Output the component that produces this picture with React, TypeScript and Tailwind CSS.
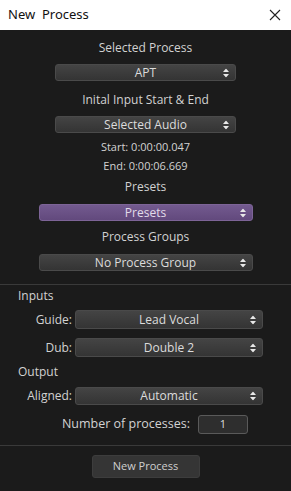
import React from 'react';

function Arrows() {
  return (
    <svg width="6" height="9" viewBox="0 0 6 9" className="shrink-0">
      <path d="M3 0 L6 3.5 L0 3.5 Z" fill="#e8e8e8" />
      <path d="M3 9 L6 5.5 L0 5.5 Z" fill="#e8e8e8" />
    </svg>
  );
}

function Select({ value, className }: { value: string; className: string }) {
  return (
    <div className={`relative flex items-center justify-center rounded-[3px] border text-[12px] leading-none ${className}`}>
      <span>{value}</span>
      <div className="absolute right-[6px] top-1/2 -translate-y-1/2 flex">
        <Arrows />
      </div>
    </div>
  );
}

const grey = 'border-[#4a4a4a] bg-gradient-to-b from-[#444] to-[#343434] text-[#dcdcdc]';

export default function App() {
  return (
    <div className="w-[291px] h-[491px] flex flex-col bg-[#1b1b1b]" style={{ fontFamily: '"Open Sans", "Noto Sans", sans-serif' }}>
      <div className="h-[30px] bg-white flex items-center justify-between pl-[8px] pr-[10px]">
        <span className="text-[13px] text-[#111]" style={{ fontFamily: '"Noto Sans", sans-serif' }}>New&nbsp; Process</span>
        <svg width="12" height="12" viewBox="0 0 12 12">
          <path d="M1 1 L11 11 M11 1 L1 11" stroke="#222" strokeWidth="1.1" />
        </svg>
      </div>

      <div className="flex flex-col items-center text-[#d2d2d2] text-[12px]">
        <div className="mt-[10px] h-[16px] leading-[16px]">Selected Process</div>
        <Select value="APT" className={`mt-[8px] w-[181px] h-[17px] ${grey}`} />
        <div className="mt-[11px] h-[16px] leading-[16px]">Inital Input Start &amp; End</div>
        <Select value="Selected Audio" className={`mt-[8px] w-[181px] h-[17px] ${grey}`} />
        <div className="mt-[6px] h-[16px] leading-[16px] text-[11px]">Start: 0:00:00.047</div>
        <div className="mt-[3px] h-[16px] leading-[16px] text-[11px]">End: 0:00:06.669</div>
        <div className="mt-[5px] h-[16px] leading-[16px]">Presets</div>
        <Select value="Presets" className="mt-[9px] w-[214px] h-[17px] border-[#7d6497] bg-gradient-to-b from-[#735a8f] to-[#62497d] text-[#e2dcea]" />
        <div className="mt-[8px] h-[16px] leading-[16px]">Process Groups</div>
        <Select value="No Process Group" className={`mt-[9px] w-[214px] h-[17px] ${grey}`} />
      </div>

      <div className="mt-[13px] h-px bg-[#3a3a3a]" />

      <div className="flex flex-col text-[#d2d2d2] text-[12px] pl-[18px]">
        <div className="mt-[3px] h-[16px] leading-[16px]">Inputs</div>
        <div className="mt-[6px] flex items-center">
          <span className="w-[57px] text-right pr-[3px]">Guide:</span>
          <Select value="Lead Vocal" className={`w-[188px] h-[19px] ${grey}`} />
        </div>
        <div className="mt-[9px] flex items-center">
          <span className="w-[57px] text-right pr-[3px]">Dub:</span>
          <Select value="Double 2" className={`w-[188px] h-[19px] ${grey}`} />
        </div>
        <div className="mt-[7px] h-[16px] leading-[16px]">Output</div>
        <div className="mt-[7px] flex items-center">
          <span className="w-[57px] text-right pr-[3px]">Aligned:</span>
          <Select value="Automatic" className={`w-[188px] h-[18px] ${grey}`} />
        </div>
        <div className="mt-[10px] flex items-center">
          <span className="w-[180px] text-right pr-[8px] text-[12.5px]">Number of processes:</span>
          <div className="w-[50px] h-[19px] rounded-[3px] border border-[#5a5a5a] bg-[#2e2e2e] flex items-center justify-center text-[11px] text-[#dcdcdc]">1</div>
        </div>
      </div>

      <div className="mt-[11px] h-px bg-[#3a3a3a]" />

      <div className="flex justify-center">
        <div className="mt-[9px] w-[108px] h-[23px] rounded-[3px] bg-[#353535] border border-[#3d3d3d] flex items-center justify-center text-[11px] text-[#cfcfcf]">New Process</div>
      </div>
    </div>
  );
}
